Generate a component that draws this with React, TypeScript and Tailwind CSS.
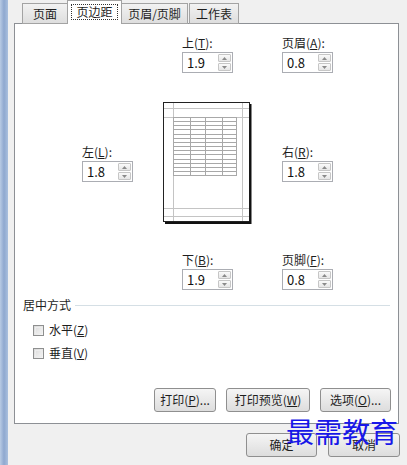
import React from 'react';

type FieldProps = { label: string; hot: string; value: string };

const Spinner = ({ value }: { value: string }) => (
  <div className="flex h-[21px] w-[51px] items-center border border-[#abadb3] bg-white pl-[4px] pr-px">
    <span className="flex-1 text-[13px] leading-none text-[#111]">{value}</span>
    <div className="flex flex-col gap-px">
      <div className="flex h-[8px] w-[13px] items-center justify-center rounded-[1px] border border-[#c6c6c6] bg-gradient-to-b from-[#fafafa] to-[#e6e6e6]">
        <svg width="5" height="3" viewBox="0 0 5 3">
          <path d="M0 3 L2.5 0 L5 3Z" fill="#8a8a8a" />
        </svg>
      </div>
      <div className="flex h-[8px] w-[13px] items-center justify-center rounded-[1px] border border-[#c6c6c6] bg-gradient-to-b from-[#fafafa] to-[#e6e6e6]">
        <svg width="5" height="3" viewBox="0 0 5 3">
          <path d="M0 0 L2.5 3 L5 0Z" fill="#8a8a8a" />
        </svg>
      </div>
    </div>
  </div>
);

const Field = ({ label, hot, value }: FieldProps) => (
  <div className="flex flex-col gap-[2px]">
    <div className="h-[14px] text-[12px] leading-[14px] text-[#1e1e1e]">
      {label}(<span className="underline">{hot}</span>):
    </div>
    <Spinner value={value} />
  </div>
);

const Btn = ({ children, className }: { children: React.ReactNode; className: string }) => (
  <button
    className={
      'flex h-[24px] items-center justify-center rounded-[3px] border border-[#8f8f8f] bg-gradient-to-b from-[#f5f5f5] to-[#dddddd] text-[12px] text-[#1e1e1e] ' +
      className
    }
  >
    {children}
  </button>
);

const Check = ({ label, hot }: { label: string; hot: string }) => (
  <div className="flex h-[14px] items-center gap-[5px]">
    <div className="h-[11px] w-[11px] border border-[#8e8f8f] bg-gradient-to-br from-[#d9d9d9] to-[#f7f7f7] p-px">
      <div className="h-full w-full border border-[#ececec]" />
    </div>
    <span className="text-[12px] leading-[14px] text-[#1e1e1e]">
      {label}(<span className="underline">{hot}</span>)
    </span>
  </div>
);

// page preview drawing
const Preview = () => {
  const rows = Array.from({ length: 15 }, (_, i) => 15 + i * 4.15);
  const cols = [10, 27, 42, 59, 73];
  return (
    <svg width="90" height="123" viewBox="0 0 90 123">
      <rect x="0.5" y="0.5" width="86" height="119" fill="#fff" stroke="#222" />
      <line x1="87.5" y1="2" x2="87.5" y2="122" stroke="#111" strokeWidth="2" />
      <line x1="2" y1="121" x2="88" y2="121" stroke="#111" strokeWidth="2" />
      {[10.5, 79.5].map((x) => (
        <line key={x} x1={x} y1="1" x2={x} y2="119" stroke="#c4c4c4" />
      ))}
      {[6.5, 15.5, 106.5, 114.5].map((y) => (
        <line key={y} x1="1" y1={y} x2="86" y2={y} stroke="#c4c4c4" />
      ))}
      {rows.map((y) => (
        <line key={y} x1="10" y1={Math.round(y) + 0.5} x2="73" y2={Math.round(y) + 0.5} stroke="#a8a8a8" />
      ))}
      {cols.map((x) => (
        <line key={x} x1={x + 0.5} y1="15" x2={x + 0.5} y2="74" stroke="#a8a8a8" />
      ))}
    </svg>
  );
};

export default function App() {
  return (
    <div className="relative flex h-[465px] w-[407px] overflow-hidden bg-[#f0f0f0] font-['Noto_Sans_CJK_SC','Microsoft_YaHei',sans-serif]">
      {/* window frame strip */}
      <div className="h-full w-[8px] bg-gradient-to-r from-[#b9cbe4] via-[#8fa8cf] to-[#aac0de]" />

      <div className="flex flex-1 flex-col pl-[6px] pr-[8px]">
        {/* Tabs */}
        <div className="relative z-10 flex h-[24px] items-end pl-[8px]">
          <div className="flex h-[21px] w-[46px] items-center justify-center border border-[#a3a3a3] bg-gradient-to-b from-[#f2f2f2] to-[#dedede] text-[12px] text-[#1e1e1e]">
            页面
          </div>
          <div className="-ml-px flex h-[24px] w-[55px] items-center justify-center border border-b-0 border-[#a3a3a3] bg-white pb-px">
            <span className="border border-dotted border-[#333] px-[4px] text-[12px] leading-[14px] text-[#1e1e1e]">
              页边距
            </span>
          </div>
          <div className="-ml-px flex h-[21px] w-[67px] items-center justify-center border border-[#a3a3a3] bg-gradient-to-b from-[#f2f2f2] to-[#dedede] text-[12px] text-[#1e1e1e]">
            页眉/页脚
          </div>
          <div className="ml-px flex h-[21px] w-[50px] items-center justify-center border border-[#a3a3a3] bg-gradient-to-b from-[#f2f2f2] to-[#dedede] text-[12px] text-[#1e1e1e]">
            工作表
          </div>
        </div>

        {/* Panel */}
        <div className="-mt-px flex h-[401px] flex-col border border-[#8d9095] bg-white">
          <div className="mt-[12px] flex pl-[67px]">
            <div className="w-[81px]" />
            <div className="w-[119px] pl-[19px]">
              <Field label="上" hot="T" value="1.9" />
            </div>
            <Field label="页眉" hot="A" value="0.8" />
          </div>

          <div className="mt-[29px] flex items-center pl-[67px]">
            <div className="w-[81px]">
              <Field label="左" hot="L" value="1.8" />
            </div>
            <div className="w-[119px]">
              <Preview />
            </div>
            <Field label="右" hot="R" value="1.8" />
          </div>

          <div className="mt-[28px] flex pl-[67px]">
            <div className="w-[81px]" />
            <div className="w-[119px] pl-[19px]">
              <Field label="下" hot="B" value="1.9" />
            </div>
            <Field label="页脚" hot="F" value="0.8" />
          </div>

          {/* Centering group */}
          <div className="mt-[8px] flex items-center pl-[8px] pr-[8px]">
            <span className="text-[12px] leading-[14px] text-[#1e1e1e]">居中方式</span>
            <div className="ml-[4px] h-px flex-1 bg-[#d5dfe5]" />
          </div>
          <div className="mt-[11px] flex flex-col gap-[9px] pl-[18px]">
            <Check label="水平" hot="Z" />
            <Check label="垂直" hot="V" />
          </div>

          <div className="mb-[11px] mt-auto flex justify-end gap-[10px] pr-[7px]">
            <Btn className="w-[62px]">
              打印(<span className="underline">P</span>)...
            </Btn>
            <Btn className="w-[84px] border-[#6f6f6f]">
              打印预览(<span className="underline">W</span>)
            </Btn>
            <Btn className="w-[71px]">
              选项(<span className="underline">O</span>)...
            </Btn>
          </div>
        </div>

        {/* Dialog buttons */}
        <div className="-mr-px flex justify-end gap-[11px] pt-[9px]">
          <Btn className="w-[71px]">确定</Btn>
          <Btn className="w-[72px]">取消</Btn>
        </div>
      </div>

      {/* watermark */}
      <div className="absolute left-[286px] top-[417px] text-[28px] leading-none text-[#1717e8]">最需教育</div>
    </div>
  );
}
